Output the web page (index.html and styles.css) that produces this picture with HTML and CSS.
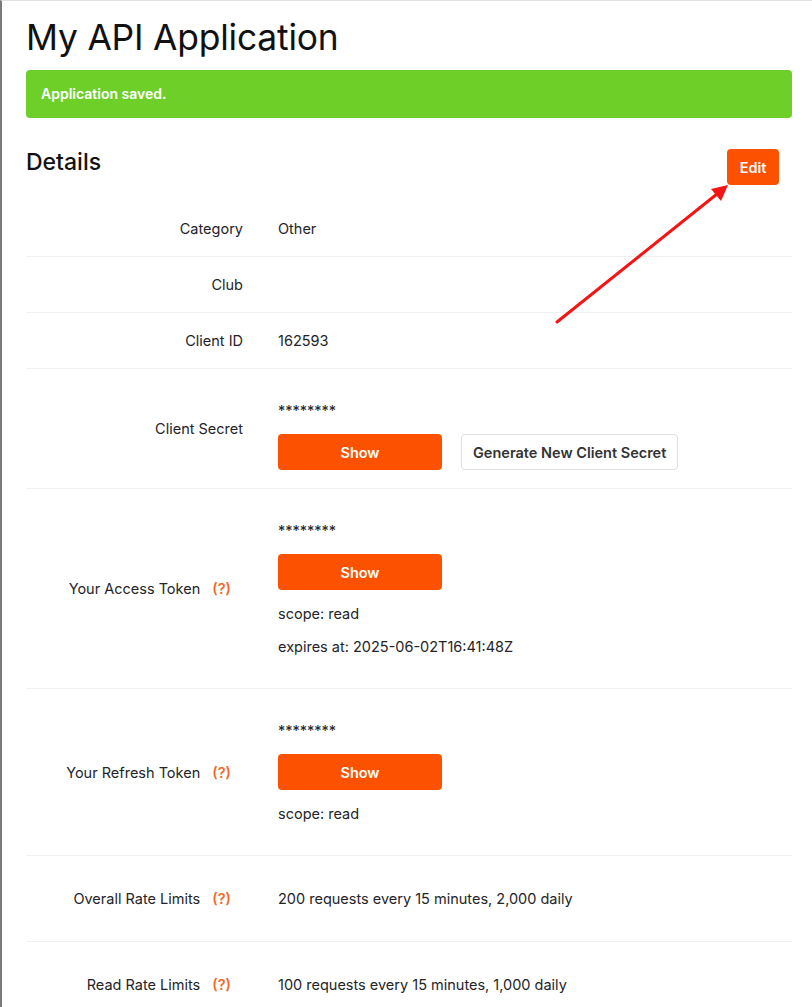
FILE: index.html
```html
<!DOCTYPE html>
<html lang="en">
<head>
    <meta charset="UTF-8">
    <meta name="viewport" content="width=device-width, initial-scale=1.0">
    <title>My API Application</title>
    <link rel="stylesheet" href="styles.css">
</head>
<body>
    <div class="frame">
        <div class="container">
            <h1>My API Application</h1>
            <div class="alert">Application saved.</div>

            <div class="details-header">
                <h2>Details</h2>
                <button class="btn btn-primary btn-edit">Edit</button>
            </div>

            <div class="details">
                <div class="row">
                    <div class="label">Category</div>
                    <div class="value">Other</div>
                </div>
                <div class="row">
                    <div class="label">Club</div>
                    <div class="value"></div>
                </div>
                <div class="row">
                    <div class="label">Client ID</div>
                    <div class="value">162593</div>
                </div>
                <div class="row">
                    <div class="label">Client Secret</div>
                    <div class="value">
                        <p>********</p>
                        <div class="actions">
                            <button class="btn btn-primary btn-show">Show</button>
                            <button class="btn btn-default">Generate New Client Secret</button>
                        </div>
                    </div>
                </div>
                <div class="row">
                    <div class="label">Your Access Token <span class="help">(?)</span></div>
                    <div class="value">
                        <p>********</p>
                        <button class="btn btn-primary btn-show">Show</button>
                        <p>scope: read</p>
                        <p>expires at: 2025-06-02T16:41:48Z</p>
                    </div>
                </div>
                <div class="row">
                    <div class="label">Your Refresh Token <span class="help">(?)</span></div>
                    <div class="value">
                        <p>********</p>
                        <button class="btn btn-primary btn-show">Show</button>
                        <p>scope: read</p>
                    </div>
                </div>
                <div class="row">
                    <div class="label">Overall Rate Limits <span class="help">(?)</span></div>
                    <div class="value">
                        <p class="single">200 requests every 15 minutes, 2,000 daily</p>
                    </div>
                </div>
                <div class="row">
                    <div class="label">Read Rate Limits <span class="help">(?)</span></div>
                    <div class="value">
                        <p class="single">100 requests every 15 minutes, 1,000 daily</p>
                    </div>
                </div>
            </div>
        </div>

        <!-- flecha de anotación hacia el botón Edit -->
        <svg class="annotation" width="812" height="1007" viewBox="0 0 812 1007">
            <line x1="557" y1="322" x2="717" y2="194" stroke="#f41414" stroke-width="3" stroke-linecap="round"/>
            <polygon points="728,185 711,189 721,201" fill="#f41414"/>
        </svg>
    </div>
</body>
</html>
```

FILE: styles.css
```css
body {
    margin: 0;
    font-family: Inter, "Noto Sans", sans-serif;
    font-size: 14.5px;
    line-height: 19px;
    color: #242428;
    background: #fff;
}
.frame {
    position: relative;
    min-height: 1006px;
    border-top: 1px solid #e2e2e2;
    border-left: 2px solid #7a7a7a;
    overflow: hidden;
}
.container {
    padding: 15px 20px 0 24px;
}
h1 {
    margin: 0 0 11px;
    font-size: 35.4px;
    line-height: 43px;
    font-weight: 400;
    color: #111;
    letter-spacing: -0.2px;
}
.alert {
    background-color: #6ecf29;
    color: #fff;
    font-size: 14px;
    font-weight: 600;
    line-height: 20px;
    padding: 14px 15px;
    border-radius: 4px;
}
.details-header {
    display: flex;
    justify-content: space-between;
    align-items: flex-start;
    margin-top: 31px;
    padding-right: 13px;
}
h2 {
    margin: 0;
    font-size: 23px;
    line-height: 26px;
    font-weight: 500;
    color: #111;
}
.btn {
    font-family: inherit;
    font-size: 14.5px;
    font-weight: 600;
    height: 36px;
    border-radius: 4px;
    cursor: pointer;
}
.btn-primary {
    background-color: #fc5200;
    color: #fff;
    border: none;
}
.btn-edit {
    width: 52px;
    padding: 0;
}
.btn-show {
    display: block;
    width: 164px;
}
.btn-default {
    background-color: #fff;
    color: #333;
    border: 1px solid #dfdfe2;
    padding: 0 11px;
}
.details {
    margin-top: 16px;
}
.row {
    display: grid;
    grid-template-columns: 217px 1fr;
    column-gap: 35px;
    align-items: center;
    padding: 18px 0;
    border-bottom: 1px solid #f0f0f0;
}
.row:last-child {
    border-bottom: none;
}
.label {
    text-align: right;
}
.help {
    color: #f7682c;
    font-weight: 600;
    margin-left: 8px;
    margin-right: 12px;
}
.value p {
    margin: 14px 0;
}
.value p.single {
    margin: 15px 0;
}
.actions {
    display: flex;
    gap: 19px;
}
.annotation {
    position: absolute;
    top: -1px;
    left: -2px;
    pointer-events: none;
}
```
